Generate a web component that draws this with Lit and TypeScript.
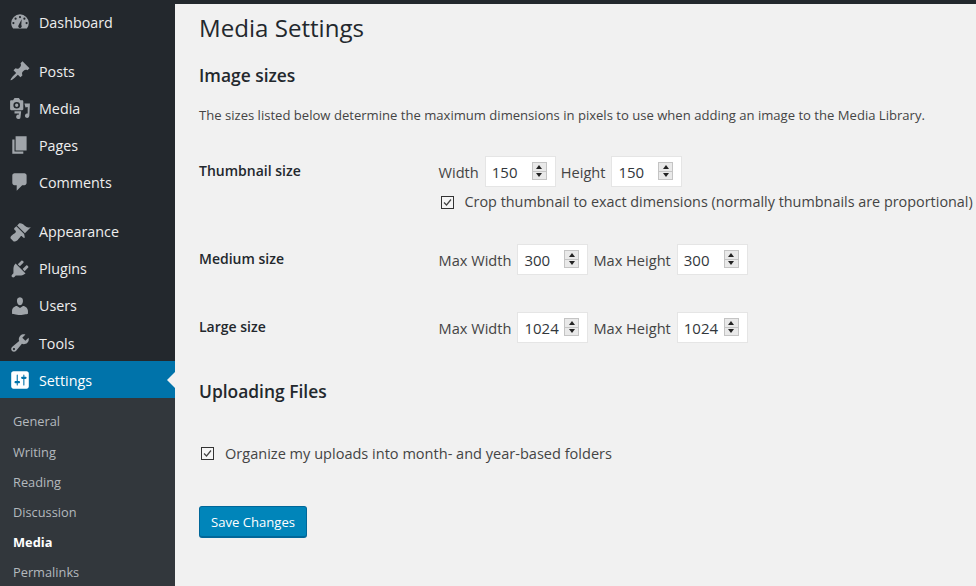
import { LitElement, html, css, svg } from "lit";
import { customElement } from "lit/decorators.js";

const icons: Record<string, unknown> = {
  dashboard: svg`<path d="M3.76 16h12.48A8 8 0 0 0 18 11a8 8 0 0 0-16 0c0 1.9.66 3.64 1.76 5zM10 4.5a1 1 0 1 1 0 2 1 1 0 0 1 0-2zM6 6a1 1 0 1 1 0 2 1 1 0 0 1 0-2zm8 0a1 1 0 1 1 0 2 1 1 0 0 1 0-2zM4 10a1 1 0 1 1 0 2 1 1 0 0 1 0-2zm12 0a1 1 0 1 1 0 2 1 1 0 0 1 0-2zM11.5 7.5l-.3 5.2a1.6 1.6 0 1 1-2.4 0z" fill-rule="evenodd"/>`,
  pin: svg`<path d="M10.44 3.02l1.82-1.82 6.36 6.35-1.83 1.82c-1.05-.68-2.48-.57-3.41.36l-.75.75c-.92.93-1.04 2.35-.35 3.41l-1.83 1.82-2.41-2.41-2.8 2.79c-.42.42-3.38 2.71-3.8 2.29s1.86-3.39 2.28-3.81l2.79-2.79L4.1 9.36l1.83-1.82c1.05.69 2.48.57 3.4-.36l.75-.75c.93-.92 1.05-2.35.36-3.41z"/>`,
  media: svg`<path d="M13 11V4c0-.55-.45-1-1-1h-1.67L9 1H5L3.67 3H2c-.55 0-1 .45-1 1v7c0 .55.45 1 1 1h10c.55 0 1-.45 1-1zM7 4.5a3 3 0 1 1 0 6 3 3 0 0 1 0-6zm0 1.5a1.5 1.5 0 1 0 0 3 1.5 1.5 0 0 0 0-3zM14 6h5v.69L18.49 17a2 2 0 1 1-1.5-1.9V9l-2 .5zM5 13h6v.6l-.51 4.4a2 2 0 1 1-1.49-1.9V15H5z" fill-rule="evenodd"/>`,
  pages: svg`<path d="M6 15V2h10v13H6zm-1 1h8v2H3V5h2v11z"/>`,
  comments: svg`<path d="M5 2h9c1.1 0 2 .9 2 2v7c0 1.1-.9 2-2 2h-2l-5 5v-5H5c-1.1 0-2-.9-2-2V4c0-1.1.9-2 2-2z"/>`,
  appearance: svg`<path d="M14.48 11.06L7.41 3.99l1.5-1.5c.5-.56 2.3-.47 3.51.32 1.21.8 1.43 1.28 2.91 2.1 1.18.64 2.45 1.26 4.45.85zm-.71.71L6.7 4.7 4.93 6.47c-.39.39-.39 1.02 0 1.41l1.06 1.06c.39.39.39 1.03 0 1.42-.6.6-1.43 1.11-2.21 1.69-.35.26-.7.53-1.01.84C1.43 13.73 1 15.34 1.53 15.87l2.47 2.6c.52.52 2.14.1 3.98-1.26.31-.31.58-.66.84-1.01.58-.78 1.09-1.61 1.69-2.21.39-.39 1.02-.39 1.41 0l1.06 1.06c.39.39 1.02.39 1.41 0z"/>`,
  plugins: svg`<path d="M13.11 4.36L9.87 7.6 8 5.73l3.24-3.24c.35-.34 1.05-.2 1.56.32.52.51.66 1.21.31 1.55zm-8 1.77l.91-1.12 9.01 9.01-1.19.84c-.71.71-2.63 1.16-3.82 1.16H6.14L4.9 17.26c-.59.59-1.54.59-2.12 0-.59-.58-.59-1.53 0-2.12l1.24-1.24v-3.88c0-1.13.4-3.19 1.09-3.89zm7.26 3.97l3.24-3.24c.34-.35 1.04-.21 1.55.31.52.51.66 1.21.31 1.55l-3.24 3.25z"/>`,
  users: svg`<path d="M10 9.25c-2.27 0-2.73-3.44-2.73-3.44C7 4.02 7.82 2 9.97 2c2.16 0 2.98 2.02 2.71 3.81 0 0-.41 3.44-2.68 3.44zm0 2.57L12.72 10c2.39 0 4.52 2.33 4.52 4.53v2.49s-3.65 1.13-7.24 1.13c-3.65 0-7.24-1.13-7.24-1.13v-2.49c0-2.25 1.94-4.48 4.47-4.48z"/>`,
  tools: svg`<path d="M16.68 9.77c-1.34 1.34-3.3 1.67-4.95.99l-5.41 6.52c-.99.99-2.59.99-3.58 0s-.99-2.59 0-3.57l6.52-5.42c-.68-1.65-.35-3.61.99-4.95 1.28-1.28 3.12-1.62 4.72-1.06l-2.89 2.89 2.82 2.82 2.86-2.87c.53 1.58.18 3.39-1.08 4.65zM3.81 16.21c.4.39 1.04.39 1.43 0 .4-.4.4-1.04 0-1.43-.39-.4-1.03-.4-1.43 0-.39.39-.39 1.03 0 1.43z" fill-rule="evenodd"/>`,
  settings: svg`<path d="M18 16V4c0-1.1-.9-2-2-2H4c-1.1 0-2 .9-2 2v12c0 1.1.9 2 2 2h12c1.1 0 2-.9 2-2zM8 11h1c.55 0 1 .45 1 1s-.45 1-1 1H8v1.5c0 .28-.22.5-.5.5s-.5-.22-.5-.5V13H6c-.55 0-1-.45-1-1s.45-1 1-1h1V5.5c0-.28.22-.5.5-.5s.5.22.5.5V11zm5-2h-1c-.55 0-1-.45-1-1s.45-1 1-1h1V5.5c0-.28.22-.5.5-.5s.5.22.5.5V7h1c.55 0 1 .45 1 1s-.45 1-1 1h-1v5.5c0 .28-.22.5-.5.5s-.5-.22-.5-.5V9z" fill-rule="evenodd"/>`,
};

const group1 = [["pin", "Posts"], ["media", "Media"], ["pages", "Pages"], ["comments", "Comments"]];
const group2 = [["appearance", "Appearance"], ["plugins", "Plugins"], ["users", "Users"], ["tools", "Tools"]];
const subs = ["General", "Writing", "Reading", "Discussion", "Media", "Permalinks"];

@customElement("app-root")
export class AppRoot extends LitElement {
  static styles = css`
    :host { display: block; width: 976px; height: 586px; overflow: hidden; background: #23282d; font-family: "Open Sans", "Noto Sans", sans-serif; }
    .page { display: flex; height: 586px; }
    .side { width: 175px; flex: none; background: #23282d; display: flex; flex-direction: column; }
    .item { height: 37.15px; box-sizing: border-box; padding-top: 1px; display: flex; align-items: center; gap: 8px; padding-left: 9px; color: #eee; font-size: 14.3px; flex: none; }
    .item svg { width: 22px; height: 22px; fill: #a0a5aa; flex: none; }
    .first { height: 44px; padding-top: 0; }
    .g1 { margin-top: 8px; }
    .g2 { margin-top: 12px; }
    .current { height: 37px; background: #0073aa; color: #fff; position: relative; }
    .current svg { fill: #fff; }
    .current::after { content: ""; position: absolute; right: 0; top: 50%; margin-top: -8px; border: 8px solid transparent; border-right-color: #f1f1f1; border-left: 0; }
    .sub { background: #32373c; flex: 1; padding-top: 8px; }
    .sub div { height: 30px; display: flex; align-items: center; padding-left: 13px; font-size: 12.8px; color: #b4b9be; }
    .sub .on { color: #fff; font-weight: 700; }
    .sub .gen { margin-bottom: 1px; }
    main { flex: 1; margin-top: 4px; background: #f1f1f1; padding-left: 24px; color: #23282d; min-width: 0; white-space: nowrap; }
    h1 { margin: 8px 0 0; font-size: 24.1px; font-weight: 400; line-height: 32px; height: 32px; }
    h2 { margin: 0; font-size: 17.4px; font-weight: 600; line-height: 24px; }
    .h-img { margin-top: 19px; }
    .desc { margin: 18px 0 0; font-size: 13.08px; line-height: 20px; color: #444; }
    .row { display: flex; }
    .lbl { width: 239.5px; flex: none; font-size: 14px; font-weight: 600; line-height: 20px; padding-top: 5px; }
    .fields { display: flex; align-items: center; font-size: 14.6px; color: #444; gap: 6px; }
    .r1 { margin-top: 31px; }
    .r2 { margin-top: 32px; }
    .r3 { margin-top: 37px; }
    .num { width: 71px; height: 31px; box-sizing: border-box; background: #fff; border: 1px solid #e5e5e5; display: flex; align-items: center; padding-left: 6px; margin-right: -1px; color: #32373c; font-size: 15px; position: relative; }
    .spin { position: absolute; right: 8px; top: 5px; width: 15px; height: 18px; background: #e9e9e9; display: flex; flex-direction: column; box-sizing: border-box; border: 1px solid #c4c4c4; }
    .spin i { flex: 1; display: flex; align-items: center; justify-content: center; }
    .spin i + i { border-top: 1px solid #c4c4c4; }
    .spin svg { width: 6px; height: 4px; fill: #222; }
    .check { display: flex; align-items: center; font-size: 14.4px; line-height: 20px; color: #444; }
    .box { width: 13px; height: 13px; box-sizing: border-box; border: 1px solid #333; background: #f5f5f5; flex: none; display: flex; }
    .box svg { width: 11px; height: 11px; fill: none; stroke: #444; stroke-width: 1.2; }
    .crop { margin: 5px 0 0 239.5px; padding-left: 2px; gap: 11px; }
    .h-up { margin-top: 36px; }
    .org { margin: 40px 0 0 2px; gap: 11px; font-size: 14.56px; }
    button { display: block; margin-top: 43px; width: 108px; height: 32px; padding: 0; box-sizing: border-box; background: #0085ba; border: 1px solid #006799; border-bottom-width: 2px; border-radius: 3px; color: #fff; font: 13.1px "Open Sans", sans-serif; }
  `;

  private icon(n: string) {
    return html`<svg viewBox="0 0 20 20">${icons[n]}</svg>`;
  }

  private menu(list: string[][], cls: string) {
    return list.map(([i, t], k) => html`<div class="item ${k === 0 ? cls : ""}">${this.icon(i)}<span>${t}</span></div>`);
  }

  private num(v: string) {
    return html`<div class="num">${v}<div class="spin"><i><svg viewBox="0 0 6 4"><path d="M3 0L6 4H0z"/></svg></i><i><svg viewBox="0 0 6 4"><path d="M0 0h6L3 4z"/></svg></i></div></div>`;
  }

  private check(t: string, cls: string) {
    return html`<div class="check ${cls}"><span class="box"><svg viewBox="0 0 11 11"><path d="M2 5.5L4.5 8 9 2.5"/></svg></span><span>${t}</span></div>`;
  }

  private row(cls: string, name: string, a: string, av: string, b: string, bv: string) {
    return html`<div class="row ${cls}"><div class="lbl">${name}</div><div class="fields"><span>${a}</span>${this.num(av)}<span>${b}</span>${this.num(bv)}</div></div>`;
  }

  render() {
    return html`<div class="page">
      <nav class="side">
        <div class="item first">${this.icon("dashboard")}<span>Dashboard</span></div>
        ${this.menu(group1, "g1")}
        ${this.menu(group2, "g2")}
        <div class="item current">${this.icon("settings")}<span>Settings</span></div>
        <div class="sub">
          ${subs.map((s) => html`<div class="${s === "Media" ? "on" : ""} ${s === "General" ? "gen" : ""}">${s}</div>`)}
        </div>
      </nav>
      <main>
        <h1>Media Settings</h1>
        <h2 class="h-img">Image sizes</h2>
        <p class="desc">The sizes listed below determine the maximum dimensions in pixels to use when adding an image to the Media Library.</p>
        ${this.row("r1", "Thumbnail size", "Width", "150", "Height", "150")}
        ${this.check("Crop thumbnail to exact dimensions (normally thumbnails are proportional)", "crop")}
        ${this.row("r2", "Medium size", "Max Width", "300", "Max Height", "300")}
        ${this.row("r3", "Large size", "Max Width", "1024", "Max Height", "1024")}
        <h2 class="h-up">Uploading Files</h2>
        ${this.check("Organize my uploads into month- and year-based folders", "org")}
        <button>Save Changes</button>
      </main>
    </div>`;
  }
}
